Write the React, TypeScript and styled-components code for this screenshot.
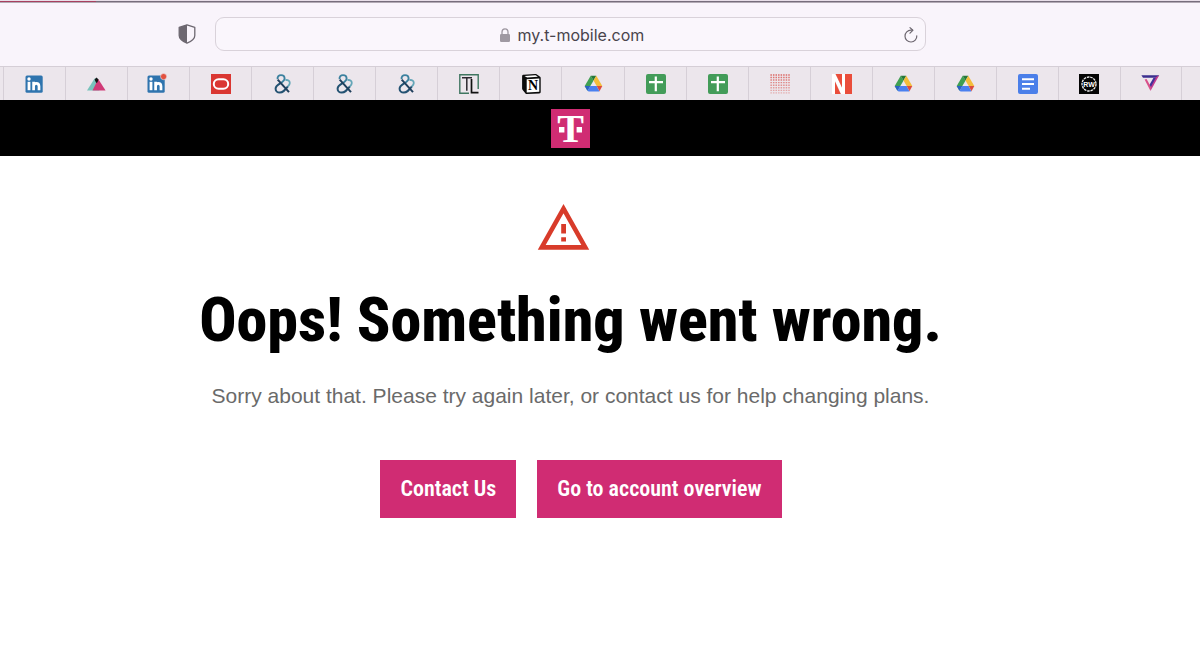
import React from "react";
import styled, { createGlobalStyle } from "styled-components";

const GlobalStyle = createGlobalStyle`
  *, *::before, *::after { box-sizing: border-box; }
  body { margin: 0; background: #fff; font-family: "Liberation Sans", Arial, sans-serif; }
  button, input { font: inherit; }
  svg { overflow: visible; }
`;

const MAGENTA = "#d02c73";
const GUTTER = "59px";
const DISPLAY_FONT = `"Roboto Condensed", "Liberation Sans Narrow", "Arial Narrow", Roboto, sans-serif`;

const Page = styled.div`
  min-height: 100vh;
  background: #fff;
  overflow-x: hidden;
`;

const LoadTrack = styled.div`
  height: 3px;
  border-top: 1px solid #e9dfe9;
  border-bottom: 1px solid #b3aab5;
  background: #776d7c;
`;

const LoadProgress = styled.div`
  width: 8%;
  height: 1px;
  background: #a8405f;
`;

const Toolbar = styled.header`
  display: grid;
  grid-template-columns: 1fr minmax(0, 711px) 1fr;
  align-items: center;
  height: 63px;
  padding: 0 ${GUTTER} 2px 0;
  background: #f9f4fb;
`;

const IconButton = styled.button`
  display: flex;
  padding: 0;
  border: 0;
  background: none;
  color: #6d6770;
`;

const ShieldButton = styled(IconButton)`
  justify-self: end;
  margin-right: 19px;
`;

const AddressBar = styled.form`
  display: grid;
  grid-template-columns: 1fr auto 1fr;
  align-items: center;
  height: 34px;
  padding: 2px 7px 0;
  border: 1px solid #d9d2da;
  border-radius: 9px;
  background: #faf6fc;
`;

const AddressLabel = styled.label`
  grid-column: 2;
  display: flex;
  align-items: center;
  gap: 8px;
  padding-left: 2px;
`;

const AddressInput = styled.input`
  width: 126px;
  padding: 0;
  border: 0;
  outline: 0;
  background: none;
  color: #49444c;
  font-family: Inter, sans-serif;
  font-size: 16px;
  line-height: 20px;
`;

const ReloadButton = styled(IconButton)`
  justify-self: end;
`;

const TabStrip = styled.nav`
  display: grid;
  grid-auto-flow: column;
  grid-auto-columns: minmax(0, 1fr);
  height: 34px;
  padding: 0 18px 0 3px;
  border-top: 1px solid #d5ced6;
  background: #ece6ec;
`;

const Tab = styled.button<{ $last?: boolean }>`
  display: flex;
  align-items: center;
  justify-content: center;
  padding: 0;
  border: 0;
  border-left: 1px solid #d6cfd7;
  border-right: ${(p) => (p.$last ? "1px solid #d6cfd7" : "0")};
  background: none;
`;

const BrandBar = styled.div`
  display: flex;
  align-items: center;
  justify-content: center;
  height: 56px;
  padding-right: ${GUTTER};
  background: #000;
`;

const BrandLink = styled.a`
  display: flex;
`;

const Main = styled.main`
  display: flex;
  flex-direction: column;
  align-items: center;
  padding: 48px ${GUTTER} 48px 0;
  text-align: center;
`;

const Alert = styled.div`
  display: flex;
  padding-right: 14px;
`;

const Title = styled.h1`
  margin: 34px 0 0;
  color: #000;
  font-family: ${DISPLAY_FONT};
  font-size: 62px;
  font-weight: 800;
  line-height: 72px;
`;

const Message = styled.p`
  margin: 28px 0 0;
  color: #6a6a6a;
  font-size: 21px;
  line-height: 24px;
`;

const Actions = styled.div`
  display: flex;
  flex-wrap: wrap;
  justify-content: center;
  margin-top: 52px;
`;

const ActionButton = styled.button`
  height: 58px;
  margin-left: 21px;
  padding: 0 20px;
  border: 0;
  background: ${MAGENTA};
  color: #fff;
  font-family: ${DISPLAY_FONT};
  font-size: 22px;
  font-weight: 600;
  line-height: 24px;
`;

const Svg = ({ children, w = 20, h = 20, box }: { children: React.ReactNode; w?: number; h?: number; box?: string }) => (
  <svg width={w} height={h} viewBox={box ?? `0 0 ${w} ${h}`} fill="none" aria-hidden="true">
    {children}
  </svg>
);

const LinkedIn = ({ dot }: { dot?: boolean }) => (
  <Svg box={dot ? "3 0 20 20" : "1 0 20 20"}>
    <rect x="1.5" y="1.5" width="17.2" height="17.2" rx="1.5" fill="#2f74ae" />
    <rect x="3.6" y="7.8" width="2.8" height="8.4" fill="#fff" />
    <circle cx="5" cy="5" r="1.7" fill="#fff" />
    <path d="M9.6 16.2V7.8M9.6 16.2v-4c0-1.9 1-2.9 2.6-2.9s2.8 1 2.8 2.9v4" stroke="#fff" strokeWidth="2.7" />
    {dot && <circle cx="17.6" cy="2.6" r="3.1" fill="#e2513f" stroke="#ece6ec" strokeWidth="0.6" />}
  </Svg>
);

const Peaks = () => (
  <Svg box="1 0 20 20">
    <path d="M1 16.5 8.6 4.5h2.8l2 12z" fill="#79c3bc" />
    <path d="M6.5 16.5 12.2 5 19.6 16.5z" fill="#d03a77" />
    <path d="M8.6 5.5 10.5 3.6 12.5 5.5 11.5 8.2 10.2 9z" fill="#151515" />
  </Svg>
);

const RedRing = () => (
  <Svg>
    <rect width="20" height="20" fill="#da3732" />
    <rect x="2.8" y="5.2" width="14.4" height="9.6" rx="4.8" stroke="#fff" strokeWidth="2" />
  </Svg>
);

const Ampersand = () => (
  <Svg>
    <path d="M4.6 5.2C4.2 2.6 5.9 1.1 8 1.1s3.6 1.4 3.6 3.4c0 2.2-1.8 3.3-4.4 4.9" stroke="#3c819f" strokeWidth="1.9" />
    <path d="M7.2 9.3C4.2 11 2.6 12.2 2.6 14.7c0 2.3 1.8 3.9 4.1 3.9 3.2 0 4.8-2 8.2-6.1" stroke="#235272" strokeWidth="2" />
    <path d="M4.7 5.6 16 18.2" stroke="#1f3f5c" strokeWidth="2" />
    <path d="M12.4 6.2c2.4-.7 4.4.5 4.4 2.8 0 1.4-.8 2.4-1.9 3.5" stroke="#64a6b8" strokeWidth="1.8" />
  </Svg>
);

const FrameMark = () => (
  <Svg>
    <path d="M10 .8H.8v18.4H10M10 .8h9.2V15M1 .8h18" stroke="#3f7660" strokeWidth="1.4" />
    <path d="M3 3.7h10M7.8 3.7v13" stroke="#2d2830" strokeWidth="1.5" />
    <path d="M12.5 5v13.7h7" stroke="#111" strokeWidth="1.7" />
  </Svg>
);

const Notebook = () => (
  <Svg box="-.5 0 20 20">
    <path d="M.6 2.2C.6 1 1.4.8 2.2.7L13.6 0c.8 0 1.2.1 1.8.5l3.2 2.3c.5.4.6.7.6 1.4v13.6c0 1-.4 1.5-1.6 1.6L5.6 20c-.8 0-1.3-.1-1.8-.8L1.2 16c-.4-.5-.6-1-.6-1.6z" fill="#0b0b0b" />
    <path d="M3 1.9 13.4 1.2c.6 0 .8 0 1.2.3l1.8 1.3L5.6 3.5z" fill="#fff" />
    <path d="M5.2 5.3 17.8 4.5V17.7L5.2 18.5z" fill="#fff" />
    <text x="11.5" y="16.2" textAnchor="middle" fontFamily="Liberation Serif, serif" fontWeight="700" fontSize="14" fill="#000">N</text>
  </Svg>
);

const Drive = () => (
  <Svg box="-.5 0 20 20">
    <path d="M7.2 1.8 1.2 12 4 16.8 10.1 6.6z" fill="#3f9f52" />
    <path d="M7.2 1.8h5.6L10 6.6z" fill="#26783a" />
    <path d="M12.8 1.8 18.8 12h-5.6L10 6.6z" fill="#f4bd3a" />
    <path d="M1.2 12h5.6L4 16.8z" fill="#2b62c4" />
    <path d="M6.8 12h6.4l2.8 5.4H5.2L4 16.8z" fill="#4a80ef" />
    <path d="M13.2 12h5.6L16 17.2z" fill="#dc4b3e" />
  </Svg>
);

const Sheet = () => (
  <Svg box="-1 0 20 20">
    <rect width="20" height="20" rx="2" fill="#439c59" />
    <path d="M3 8.2h14M9.8 2.6v14.6" stroke="#fff" strokeWidth="2.2" />
  </Svg>
);

const Dots = () => (
  <Svg box="-1 0 20 20">
    {Array.from({ length: 8 }, (_, row) => (
      <path
        key={row}
        d={`M.4 ${1 + row * 2.55}h19.4`}
        stroke="#dc6a66"
        strokeWidth={1.6 - row * 0.06}
        strokeDasharray="1.5 1.05"
        opacity={1 - row * 0.08}
      />
    ))}
  </Svg>
);

const RedBars = () => (
  <Svg box="-1 0 20 20">
    <path d="M0 0h3.5L10 14V0h3v20H9.2L3 6.5V20H0z" fill="#fff" />
    <path d="M3.5 0H10v13.5z" fill="#ea4d3b" />
    <path d="M3 7.5 8.8 20H3zM13 0h7v20h-7z" fill="#ea4d3b" />
  </Svg>
);

const Doc = () => (
  <Svg box="-1 0 20 20">
    <rect width="20" height="20" rx="2" fill="#4b7fe9" />
    <path d="M4 5.2h12M4 10h12M4 14.8h8" stroke="#fff" strokeWidth="2" />
  </Svg>
);

const Badge = () => (
  <Svg>
    <rect width="20" height="20" fill="#050505" />
    <circle cx="10" cy="10" r="7" stroke="#eee" strokeWidth="1.3" strokeDasharray="2.6 .8" />
    <text x="10" y="12.6" textAnchor="middle" fontFamily="Liberation Sans, sans-serif" fontWeight="700" fontSize="7" fill="#fff">RW</text>
  </Svg>
);

const Prism = () => (
  <Svg box="1 0 20 20">
    <path d="M1.4 1.2h17.8l-2.4 2.6H3z" fill="#3b2f8f" />
    <path d="M19.2 1.2 10.6 16.8 9.6 13.2 14.8 3.8z" fill="#c23a8e" />
    <path d="M16 3.6 10 14.4 9.2 11.2 13.4 4z" fill="#43309a" />
    <path d="M4.6 5.4 6.6 5 11.2 13.4 10.4 16.8z" fill="#d8508a" />
  </Svg>
);

const Shield = () => (
  <Svg w={18} h={20}>
    <path d="M9 .8 16.8 3.4v8.2c0 3.6-3.6 5.9-7.8 7.6-4.2-1.7-7.8-4-7.8-7.6V3.4z" stroke="#6d6770" strokeWidth="1.3" strokeLinejoin="round" />
    <path d="M9 .8v18.4c-4.2-1.7-7.8-4-7.8-7.6V3.4z" fill="#6d6770" />
  </Svg>
);

const Lock = () => (
  <Svg w={10} h={14}>
    <rect y="6" width="10" height="8" rx="1.2" fill="#9f99a2" />
    <path d="M2 6.5V4a3 3.2 0 0 1 6 0v2.5" stroke="#9f99a2" strokeWidth="1.3" />
  </Svg>
);

const Reload = () => (
  <Svg w={14} h={16}>
    <path d="M12.8 8.8A5.9 5.9 0 1 1 7 3.2h1.6" stroke="#6d6770" strokeWidth="1.2" strokeLinecap="round" />
    <path d="M6 .6 8.8 3.3 6 6.2" stroke="#6d6770" strokeWidth="1.2" strokeLinecap="round" strokeLinejoin="round" />
  </Svg>
);

const BrandLogo = () => (
  <Svg w={39} h={39}>
    <rect width="39" height="39" fill={MAGENTA} />
    <text x="19.5" y="33" textAnchor="middle" fontFamily="Liberation Serif, serif" fontWeight="700" fontSize="40" fill="#fff">T</text>
    <path d="M8 18h5.4v5.4H8zM25.6 18H31v5.4h-5.4z" fill="#fff" />
  </Svg>
);

const Warning = () => (
  <Svg w={51} h={46}>
    <path d="M25.5 4.6 47.3 43.4H3.7z" stroke="#d83b2a" strokeWidth="4.6" />
    <path d="M23.2 20h4.8v9.4h-4.8zM23.2 33.3h4.8v4.2h-4.8z" fill="#d83b2a" />
  </Svg>
);

const tabs: { name: string; icon: React.ReactNode }[] = [
  { name: "LinkedIn", icon: <LinkedIn /> },
  { name: "Peaks", icon: <Peaks /> },
  { name: "LinkedIn notifications", icon: <LinkedIn dot /> },
  { name: "Oracle", icon: <RedRing /> },
  { name: "Ampersand 1", icon: <Ampersand /> },
  { name: "Ampersand 2", icon: <Ampersand /> },
  { name: "Ampersand 3", icon: <Ampersand /> },
  { name: "TL", icon: <FrameMark /> },
  { name: "Notion", icon: <Notebook /> },
  { name: "Drive 1", icon: <Drive /> },
  { name: "Sheet 1", icon: <Sheet /> },
  { name: "Sheet 2", icon: <Sheet /> },
  { name: "Dots", icon: <Dots /> },
  { name: "News", icon: <RedBars /> },
  { name: "Drive 2", icon: <Drive /> },
  { name: "Drive 3", icon: <Drive /> },
  { name: "Document", icon: <Doc /> },
  { name: "RW", icon: <Badge /> },
  { name: "Prism", icon: <Prism /> },
];

export default function App() {
  return (
    <Page>
      <GlobalStyle />
      <LoadTrack>
        <LoadProgress />
      </LoadTrack>
      <Toolbar>
        <ShieldButton type="button" aria-label="Privacy report">
          <Shield />
        </ShieldButton>
        <AddressBar onSubmit={(e) => e.preventDefault()}>
          <AddressLabel>
            <Lock />
            <AddressInput aria-label="Address" defaultValue="my.t-mobile.com" />
          </AddressLabel>
          <ReloadButton type="button" aria-label="Reload">
            <Reload />
          </ReloadButton>
        </AddressBar>
      </Toolbar>
      <TabStrip aria-label="Open tabs">
        {tabs.map((tab, i) => (
          <Tab key={tab.name} type="button" aria-label={tab.name} $last={i === tabs.length - 1}>
            {tab.icon}
          </Tab>
        ))}
      </TabStrip>
      <BrandBar>
        <BrandLink href="#" aria-label="T-Mobile">
          <BrandLogo />
        </BrandLink>
      </BrandBar>
      <Main>
        <Alert>
          <Warning />
        </Alert>
        <Title>Oops! Something went wrong.</Title>
        <Message>Sorry about that. Please try again later, or contact us for help changing plans.</Message>
        <Actions>
          <ActionButton type="button">Contact Us</ActionButton>
          <ActionButton type="button">Go to account overview</ActionButton>
        </Actions>
      </Main>
    </Page>
  );
}
